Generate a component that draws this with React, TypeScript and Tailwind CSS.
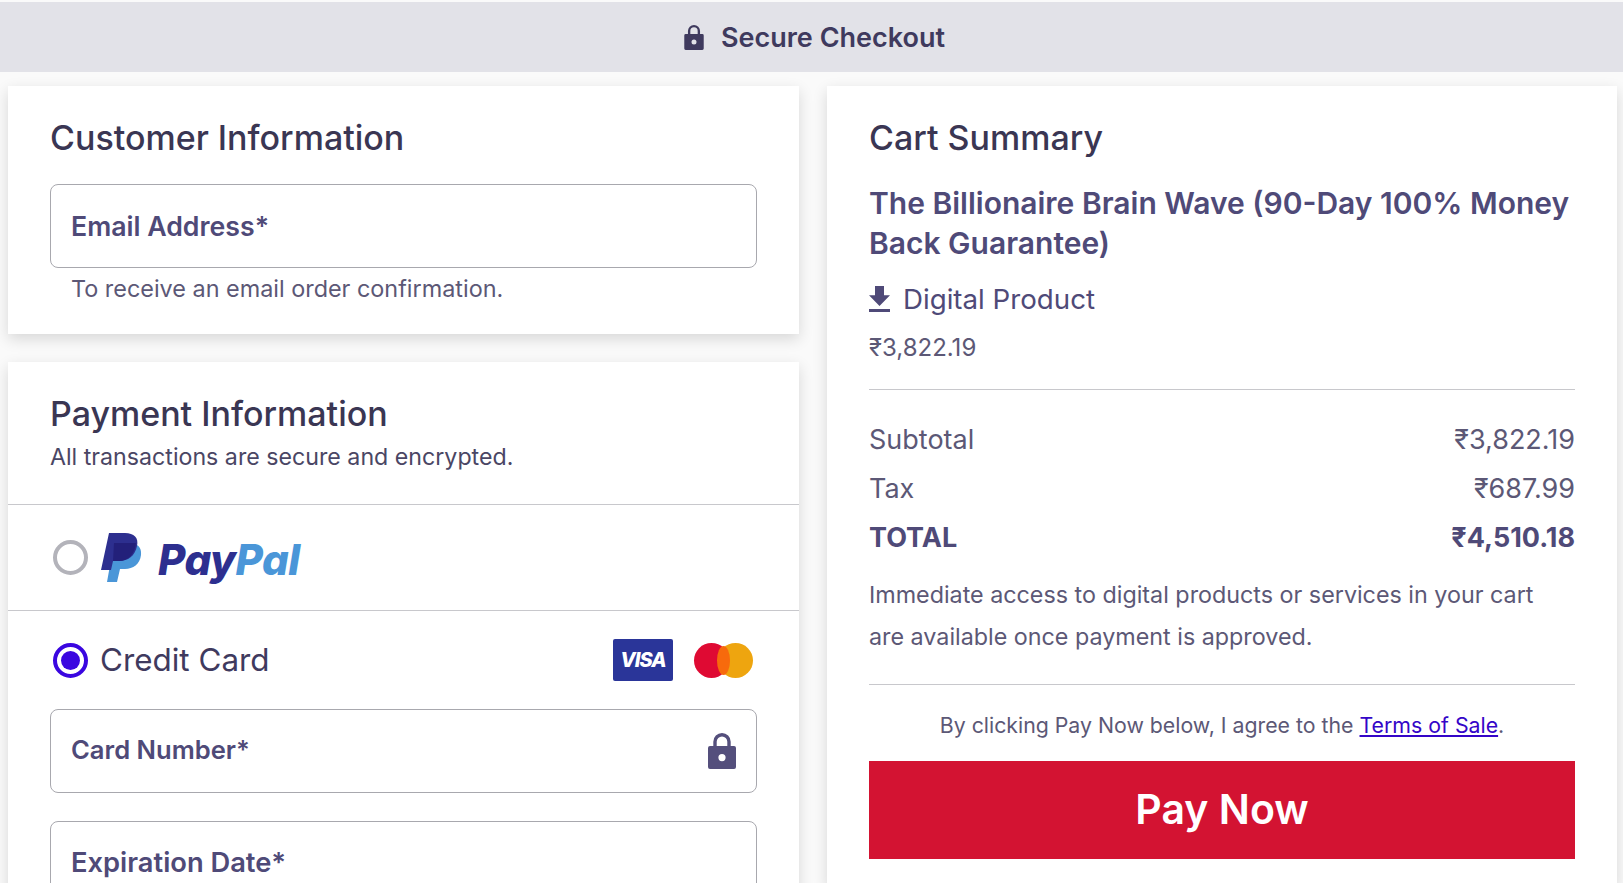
function LockIcon({ className }: { className?: string }) {
  return (
    <svg viewBox="0 0 28 36" className={className} fill="currentColor">
      <path d="M7 15V8.7a7 7 0 0 1 14 0V15" fill="none" stroke="currentColor" strokeWidth="3.4" />
      <path fillRule="evenodd" d="M2 13h24a2 2 0 0 1 2 2v19a2 2 0 0 1-2 2H2a2 2 0 0 1-2-2V15a2 2 0 0 1 2-2Zm12 8a3.6 3.6 0 1 0 0 7.2 3.6 3.6 0 0 0 0-7.2Z" />
    </svg>
  );
}

function PayPalMark() {
  return (
    <svg viewBox="0 0 42 50" className="w-[42px] h-[50px]">
      <path d="M13 10h15c8 0 13 4 12 12-1 9-8 14-16 14h-5l-3 13H6Z" fill="#4a96d8" />
      <path d="M8 0h16c9 0 14 5 12 13-2 10-9 15-18 15h-6l-2 9H0Z" fill="#2d2f8f" />
      <path d="M13 10h22c-1 11-8 18-17 18h-6Z" fill="#23207a" />
    </svg>
  );
}

function Field({ label, size, icon, className }: { label: string; size: string; icon?: boolean; className?: string }) {
  return (
    <div className={`h-[84px] border border-[#a8a8ae] rounded-[8px] pl-[20px] pr-[20px] pt-[26px] flex justify-between ${className ?? ""}`}>
      <span className={`${size} leading-[30px] font-semibold text-[#4f4a78]`}>{label}</span>
      {icon && <LockIcon className="w-[28px] h-[36px] -mt-[3px] text-[#544f7c]" />}
    </div>
  );
}

function Row({ label, value, bold }: { label: string; value: string; bold?: boolean }) {
  return (
    <div className={`flex justify-between text-[27px] leading-[49px] ${bold ? "font-bold text-[#4f4a78]" : "text-[#5c5876]"}`}>
      <span>{label}</span>
      <span>{value}</span>
    </div>
  );
}

export default function App() {
  return (
    <div className="h-[883px] overflow-hidden bg-[#fafafa] pt-[2px] font-['Inter',sans-serif] text-[#3a3653]">
      {/* Header */}
      <div className="h-[70px] bg-[#e2e2e8] flex items-center justify-center gap-[17px] pl-[6px]">
        <LockIcon className="w-[20px] h-[25px] text-[#3f3a5e]" />
        <span className="pt-[2px] text-[27px] font-semibold text-[#3f3a5e]">Secure Checkout</span>
      </div>

      <div className="flex gap-[28px] pl-[8px] pr-[6px] pt-[14px]">
        {/* Left column */}
        <div className="w-[791px] shrink-0 flex flex-col gap-[28px]">
          <div className="h-[248px] bg-white shadow-[0_5px_14px_rgba(0,0,0,0.14)] px-[42px] pt-[30px]">
            <h2 className="text-[34px] leading-[44px] font-medium">Customer Information</h2>
            <Field label="Email Address*" size="text-[26.7px]" className="mt-[24px]" />
            <p className="pl-[21px] mt-[4px] text-[23.4px] leading-[34px] text-[#5c5876]">To receive an email order confirmation.</p>
          </div>

          <div className="flex-1 bg-white shadow-[0_5px_14px_rgba(0,0,0,0.14)] h-[521px]">
            <div className="px-[42px] pt-[30px] h-[143px] border-b border-[#c8c8cc]">
              <h2 className="text-[34px] leading-[44px] font-medium">Payment Information</h2>
              <p className="mt-[4px] text-[23.2px] leading-[34px] text-[#4a4664]">All transactions are secure and encrypted.</p>
            </div>
            <div className="h-[106px] border-b border-[#c8c8cc] px-[45px] flex items-center">
              <span className="w-[35px] h-[35px] rounded-full border-[4px] border-[#b3b3ba]" />
              <span className="ml-[13px]"><PayPalMark /></span>
              <span className="ml-[15px] pt-[4px] text-[42px] leading-none italic font-extrabold tracking-[-0.5px] text-[#2d2f8f]">
                Pay<span className="text-[#4a96d8]">Pal</span>
              </span>
            </div>
            <div className="px-[42px] pt-[28px]">
              <div className="flex items-center pl-[3px] pr-[4px]">
                <span className="w-[35px] h-[35px] rounded-full border-[4px] border-[#3a06e0] flex items-center justify-center">
                  <span className="w-[19px] h-[19px] rounded-full bg-[#3a06e0]" />
                </span>
                <span className="ml-[12px] text-[31.4px] leading-[42px] text-[#3f3a5e]">Credit Card</span>
                <span className="ml-auto w-[60px] h-[42px] rounded-[2px] bg-[#2a3599] flex items-center justify-center text-[20px] font-extrabold italic text-white tracking-[-1px]">VISA</span>
                <span className="relative ml-[21px] w-[59px] h-[35px]">
                  <span className="absolute left-0 top-0 w-[35px] h-[35px] rounded-full bg-[#df0a33]" />
                  <span className="absolute right-0 top-0 w-[35px] h-[35px] rounded-full bg-[#eea50f]" />
                  <span className="absolute left-[23px] top-[3px] w-[13px] h-[29px] rounded-[50%] bg-[#f76a0c]" />
                </span>
              </div>
              <Field label="Card Number*" size="text-[25.6px] -mt-[1px]" icon className="mt-[28px]" />
              <Field label="Expiration Date*" size="text-[27.3px]" className="mt-[28px]" />
            </div>
          </div>
        </div>

        {/* Cart summary */}
        <div className="w-[790px] shrink-0 h-[800px] bg-white shadow-[0_5px_14px_rgba(0,0,0,0.14)] px-[42px] pt-[30px]">
          <h2 className="text-[34px] leading-[44px] font-medium">Cart Summary</h2>
          <h3 className="mt-[23px] text-[30px] leading-[40px] font-semibold text-[#4f4a78]">
            The Billionaire Brain Wave (90-Day 100% Money Back Guarantee)
          </h3>
          <div className="mt-[17px] flex items-center gap-[13px] text-[27.7px] leading-[38px] text-[#4f4a78]">
            <svg viewBox="5 3 14 17" className="w-[21px] h-[26px]" fill="currentColor" preserveAspectRatio="none">
              <path d="M19 9h-4V3H9v6H5l7 7 7-7ZM5 18v2h14v-2H5Z" />
            </svg>
            Digital Product
          </div>
          <p className="mt-[13px] text-[24px] leading-[34px] text-[#5c5876]">₹3,822.19</p>
          <div className="mt-[24px] border-t border-[#c8c8cc]" />
          <div className="mt-[25px]">
            <Row label="Subtotal" value="₹3,822.19" />
            <Row label="Tax" value="₹687.99" />
            <Row label="TOTAL" value="₹4,510.18" bold />
          </div>
          <p className="mt-[12px] pr-[30px] text-[23.3px] leading-[41.5px] text-[#5c5876]">
            Immediate access to digital products or services in your cart are available once payment is approved.
          </p>
          <div className="mt-[27px] border-t border-[#c8c8cc]" />
          <p className="mt-[23px] text-center text-[21.3px] leading-[34px] text-[#5c5876]">
            By clicking Pay Now below, I agree to the <a className="underline text-[#3405c8]">Terms of Sale</a>.
          </p>
          <button className="mt-[19px] w-full h-[98px] bg-[#d31332] text-white text-[41px] font-semibold">Pay Now</button>
        </div>
      </div>
    </div>
  );
}
